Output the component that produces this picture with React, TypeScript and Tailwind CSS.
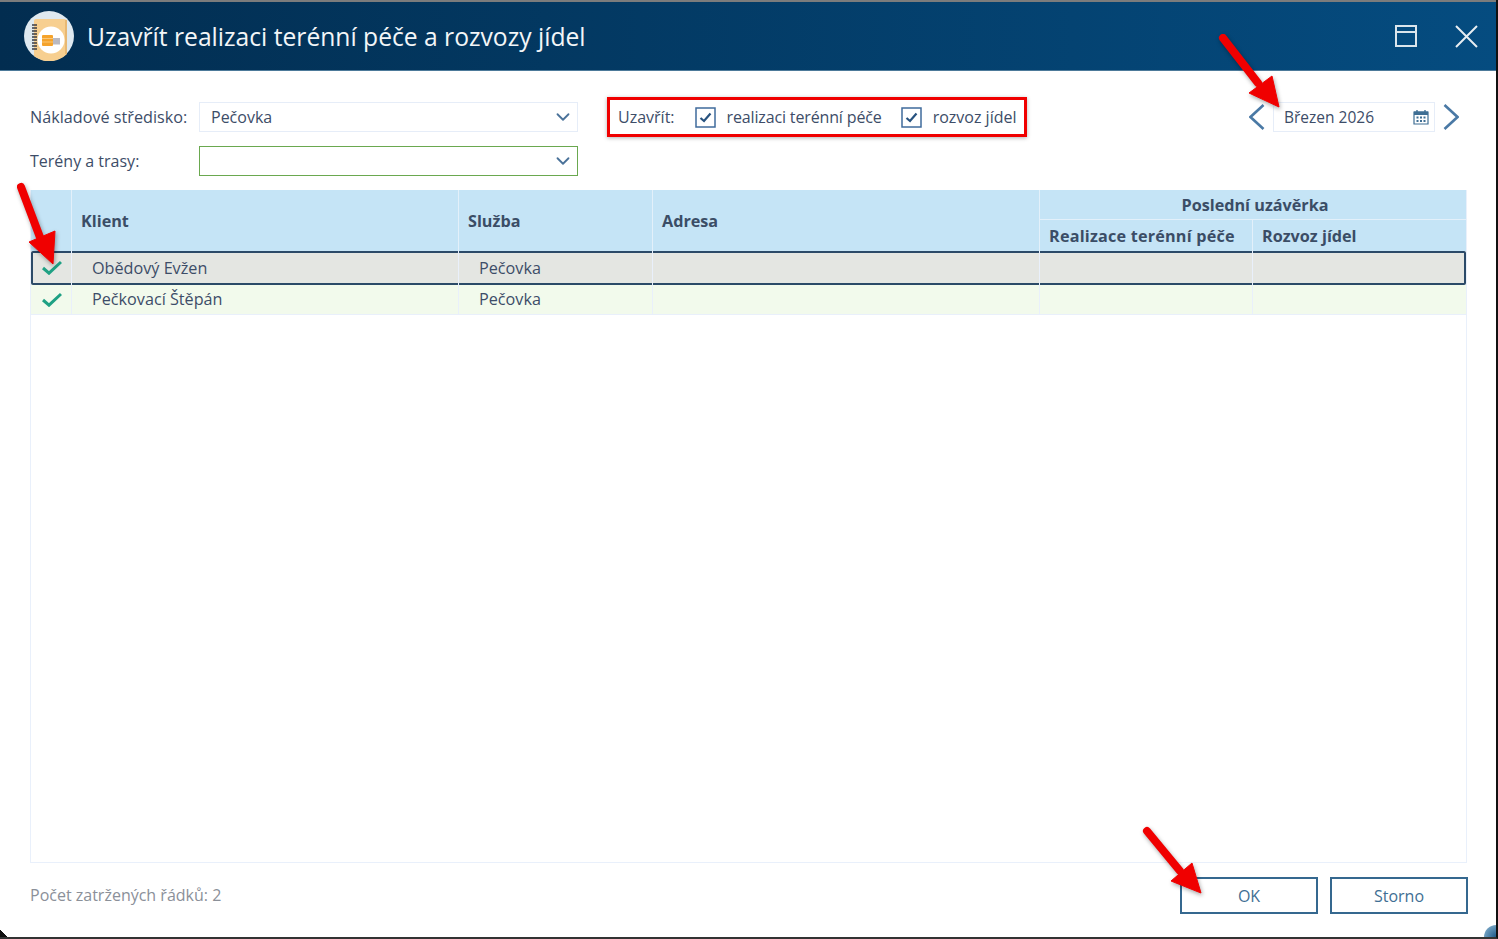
import { ChevronDown } from 'lucide-react';

const COLS = 'grid grid-cols-[41px_387px_194px_387px_213px_1fr]';

function Logo() {
  return (
    <svg width="50" height="50" viewBox="0 0 50 50" className="shrink-0">
      <circle cx="25" cy="25" r="25" fill="#dfe9f0" />
      <path d="M10 10 a2 2 0 0 1 2 -2 h28 a3 3 0 0 1 3 3 v32 a25 25 0 0 1 -33 2 z" fill="#f7cf90" />
      <rect x="41" y="9" width="2" height="34" fill="#e8b873" />
      <circle cx="27" cy="29" r="13.5" fill="#ffffff" />
      <rect x="18" y="24" width="11" height="11" rx="1" fill="#f5a32c" />
      <path d="M18 27.5h11M18 31h11" stroke="#fbd08a" strokeWidth="0.8" />
      <rect x="29" y="27" width="7" height="6.5" fill="#b9b9c2" />
      <path d="M8 14h5M8 17h5M8 20h5M8 23h5M8 26h5M8 29h5M8 32h5M8 35h5M8 38h5" stroke="#3c3c44" strokeWidth="1.5" />
    </svg>
  );
}

function Select({ value, green }: { value?: string; green?: boolean }) {
  return (
    <div
      className={`flex h-[30px] w-[379px] items-center justify-between pl-[11px] pr-[3px] border ${
        green ? 'border-[#6aa84f]' : 'border-[#e6edf8]'
      }`}
    >
      <span>{value}</span>
      <ChevronDown size={22} strokeWidth={2} className="text-[#4a7299]" />
    </div>
  );
}

function Checkbox() {
  return (
    <svg width="21" height="21" viewBox="0 0 21 21" className="shrink-0">
      <rect x="1" y="1" width="19" height="19" fill="#fff" stroke="#3f6b9c" strokeWidth="1.5" />
      <path d="M5.5 11l3.5 3L15.5 6.5" fill="none" stroke="#27527f" strokeWidth="2.2" />
    </svg>
  );
}

function CalendarIcon() {
  return (
    <svg width="16" height="16" viewBox="0 0 16 16">
      <path d="M1 3h14v12H1z" fill="#fff" stroke="#3f6f94" strokeWidth="1.2" />
      <path d="M1 2.5h14V6H1z" fill="#3f6f94" />
      <path d="M4 1v3M12 1v3" stroke="#3f6f94" strokeWidth="1.4" />
      <path
        d="M3.5 7.5h2v2h-2zM7 7.5h2v2H7zM10.5 7.5h2v2h-2zM3.5 11h2v2h-2zM7 11h2v2H7zM10.5 11h2v2h-2z"
        fill="#3f6f94"
      />
    </svg>
  );
}

function Chevron({ right }: { right?: boolean }) {
  return (
    <svg width="16" height="26" viewBox="0 0 16 26" className="shrink-0">
      <path
        d={right ? 'M1.5 1L14.5 13L1.5 25' : 'M14.5 1L1.5 13L14.5 25'}
        fill="none"
        stroke="#4a79a5"
        strokeWidth="2.6"
      />
    </svg>
  );
}

function CheckMark() {
  return (
    <svg width="20" height="15" viewBox="0 0 20 15" className="mb-[1px] ml-[2px]">
      <path d="M1 8l6 5.2L19 2" fill="none" stroke="#1fa184" strokeWidth="3" />
    </svg>
  );
}

function Arrows() {
  return (
    <svg
      width="1498"
      height="939"
      viewBox="0 0 1498 939"
      className="absolute inset-0 pointer-events-none drop-shadow-[1px_2px_2px_rgba(0,0,0,0.35)]"
    >
      <g fill="#f00000" stroke="#f00000">
        <path d="M1223 38L1258 83" strokeWidth="8" strokeLinecap="round" />
        <path d="M1279 107L1249 93L1272 76Z" strokeWidth="1" />
        <path d="M21 187L41 240" strokeWidth="8" strokeLinecap="round" />
        <path d="M53 264L29 242L55 231Z" strokeWidth="1" />
        <path d="M1147 831L1180 871" strokeWidth="8" strokeLinecap="round" />
        <path d="M1201 893L1171 881L1192 863Z" strokeWidth="1" />
      </g>
    </svg>
  );
}

function Row({ name, selected }: { name: string; selected?: boolean }) {
  const cell = 'border-r border-[#e9f0fb]';
  const text = selected
    ? 'flex items-center pl-[20px] text-[16.2px]'
    : 'flex items-center pl-[20px] pb-[1px] text-[16.2px]';
  return (
    <div
      className={`${COLS} items-stretch ${
        selected
          ? 'h-[34px] bg-[#e4e6e2] shadow-[inset_0_0_0_2px_#2b4a68] rounded-[2px]'
          : 'h-[30px] bg-[#f2faec] border-b border-[#e9f0fb]'
      }`}
    >
      <div className={`${cell} flex items-center justify-center`}>
        <CheckMark />
      </div>
      <div className={`${cell} ${text}`}>{name}</div>
      <div className={`${cell} ${text}`}>Pečovka</div>
      <div className={cell} />
      <div className={cell} />
      <div />
    </div>
  );
}

export default function App() {
  const head = 'border-r border-[#e3f0fa] flex items-center pl-[9px] pt-[1px] font-bold text-[16.2px] text-[#3b4d66]';
  return (
    <div className="relative flex h-[939px] w-[1498px] flex-col overflow-hidden border-r-2 border-b-2 border-r-[#111] border-b-[#333] bg-white font-['Open_Sans',sans-serif] text-[16px] text-[#3d4d68]">
      <div className="h-[2px] shrink-0 bg-[#7c7c7c]" />
      <header className="flex h-[69px] shrink-0 items-center border-b border-[#4d7a9a] bg-gradient-to-r from-[#022d50] to-[#054c80] pl-[24px] pr-[18px]">
        <Logo />
        <h1 className="ml-[13px] mt-[2px] text-[24.65px] text-[#f3f6f8]">Uzavřít realizaci terénní péče a rozvozy jídel</h1>
        <div className="ml-auto flex items-center gap-[38px]">
          <div className="flex h-[22px] w-[22px] flex-col border-2 border-[#dbe5ec]">
            <div className="mt-[4px] h-[2px] bg-[#dbe5ec]" />
          </div>
          <svg width="23" height="23" viewBox="0 0 23 23">
            <path d="M1 1L22 22M22 1L1 22" stroke="#e8eef2" strokeWidth="2" />
          </svg>
        </div>
      </header>

      <main className="flex flex-1 flex-col pl-[30px] pr-[28px] pt-[31px]">
        <div className="flex h-[30px] items-center">
          <label className="w-[169px] text-[16.2px]">Nákladové středisko:</label>
          <Select value="Pečovka" />
          <div className="ml-[29px] flex h-[40px] w-[420px] items-center border-[3px] border-[#f00000] pl-[8px] shadow-[0_1px_4px_rgba(0,0,0,0.3)]">
            <span>Uzavřít:</span>
            <span className="ml-[20px]"><Checkbox /></span>
            <span className="ml-[11px] tracking-[-0.14px]">realizaci terénní péče</span>
            <span className="ml-[19px]"><Checkbox /></span>
            <span className="ml-[11px]">rozvoz jídel</span>
          </div>
          <div className="ml-auto mr-[9px] flex items-center">
            <Chevron />
            <div className="mx-[8px] flex h-[30px] w-[162px] items-center justify-between border border-[#e6edf8] pl-[10px] pr-[5px]">
              <span className="pt-[1px] text-[15.5px]">Březen 2026</span>
              <CalendarIcon />
            </div>
            <Chevron right />
          </div>
        </div>

        <div className="mt-[14px] flex h-[30px] items-center">
          <label className="w-[169px]">Terény a trasy:</label>
          <Select green />
        </div>

        <section className="mr-[1px] mt-[14px] flex h-[673px] flex-col border border-t-0 border-[#e9f0fb]">
          <div className={`${COLS} h-[61px] grid-rows-[30px_31px] bg-[#c5e4f6]`}>
            <div className="row-span-2 border-r border-[#e3f0fa]" />
            <div className={`${head} row-span-2`}>Klient</div>
            <div className={`${head} row-span-2`}>Služba</div>
            <div className={`${head} row-span-2`}>Adresa</div>
            <div className="col-span-2 flex items-center justify-center border-b border-[#e3f0fa] pl-[4px] pt-[1px] text-[16.2px] font-bold text-[#3b4d66]">
              Poslední uzávěrka
            </div>
            <div className={`${head} tracking-[0.2px]`}>Realizace terénní péče</div>
            <div className="flex items-center pl-[9px] pt-[1px] text-[16.2px] font-bold text-[#3b4d66]">Rozvoz jídel</div>
          </div>
          <Row name="Obědový Evžen" selected />
          <Row name="Pečkovací Štěpán" />
        </section>

        <footer className="flex flex-1 items-start justify-between pt-[14px]">
          <span className="mt-[6px] text-[#8b9099]">Počet zatržených řádků: 2</span>
          <div className="flex gap-[12px]">
            <button className="h-[37px] w-[138px] border-2 border-[#35688f] text-[#3f6f94]">OK</button>
            <button className="h-[37px] w-[138px] border-2 border-[#35688f] text-[#3f6f94]">Storno</button>
          </div>
        </footer>
      </main>
      <Arrows />
      {/* window corners caught in the screenshot */}
      <div className="absolute bottom-0 left-0 h-[7px] w-[7px] bg-[linear-gradient(45deg,#111_50%,transparent_50%)]" />
      <div className="absolute bottom-0 right-0 h-[12px] w-[12px] rounded-tl-full bg-[radial-gradient(circle_at_100%_100%,#1d5a8a_0%,#6a9abc_65%,#c5d8e6_100%)]" />
    </div>
  );
}
